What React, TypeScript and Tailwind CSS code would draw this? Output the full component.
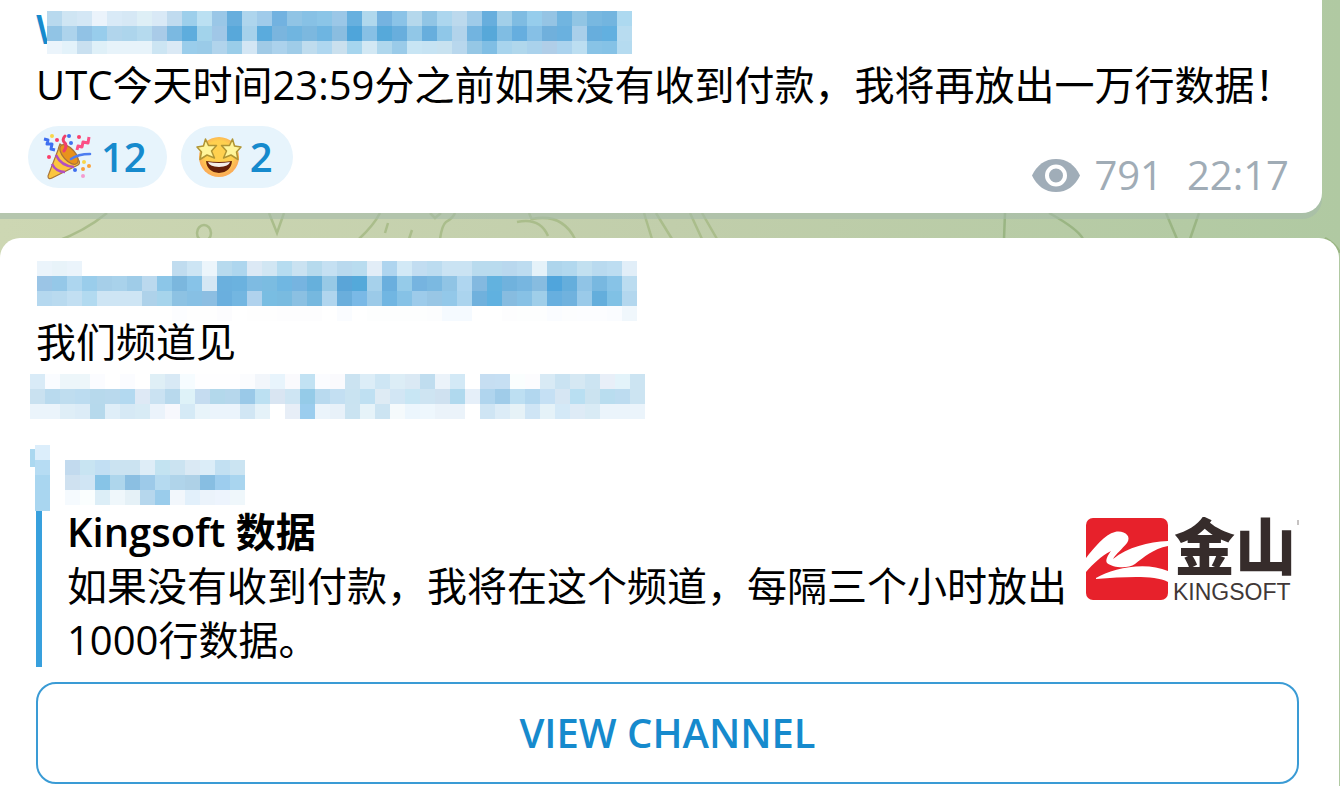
import React from "react";

const CELL = 15;

const channelName = [
  "b8d9ee cfe5f3 d4e7f5 ebf3fb d9eaf7 d6e8f5 deeff6 d9e9f6 c0dbef 9dcfeb bbe0f2 9ac7e7 67aedd aed5ed a0cbea 72b2e0 90c4e5 87c1e5 8bc5e7 9bc7e7 67b0df b0d8ed 75b3e0 8bc3e7 b5d8ec 91c5e5 acd6ee bcd9ed 9fcbe9 67aedd a2cfe9 7fbce2 96cdec 95c4e4 71b5e0 91c5e4 78b8e0 73b5df add9f0",
  "91c4e5 add3ec 91c2e5 98cdec b1d5ec add5ec b5daee a9cbe8 7bb9e1 5eaddd a2d3eb a0c7e7 58a8da a6d1eb 5aabdd 7ab5de 70b5e0 7cb8df 6eb5e1 8abde0 4fa5da 87c0e5 56a9da 68aedd 91c7e7 67aedd 8fc7e8 b2d3eb 72b4e0 57a8d9 80bde3 66aedf 86c0e6 70b0dc 6ab1df a9cfea 67aedd 62b0e0 b8dcf0",
  "ebf4fb e3f2fa c9e0f0 dff0f8 e7f3fa e7f3fa e7f3fa cce5f3 dae9f5 9acdeb 9acbe8 b1d4ec 9acde9 d3e6f4 a0cae6 acd2ec 9fcce8 bfdcee afd7f0 cae0ee a6d5ee d2e8f4 afd7ed 9acbe9 c8e5f4 c6e3f3 c8e2f0 b8d7ed 95c7e5 80bee4 a8d4ed b0d7ec aad2ec b0cee8 abd3ee bcdef1 88c3e6 85c2e6 b5dbf0",
];

const secondName = [
  "ebf4fb e8f3f9 ebf4fb ffffff ffffff ffffff ffffff ffffff ffffff c0dcef cde5f4 ecf5fb b7daee aed6ee dce9f5 d1e6f3 b6dcf0 cae2f1 b6daed c5e0f2 b9d9ee b9dcef e2edf7 afd5ef d2e9f6 c2ddf1 bcdcf0 cae3f3 cae3f3 b9dbee b9dbee b9d8ee bddcf0 e5f2f9 aed5ec b2d8ee c2e0f0 b9daef bdddf1 e1eef8",
  "9bc5e6 95c8e8 add6ef 9acdeb a6cfe9 a9d2eb 9fcce8 bbd9ee 8cc6e8 7bb7de 87c3e8 d5e7f4 6ab0de 6bb2df 7ebbe2 7bbce1 70b7e2 76b4e0 66b0dc 97c9e6 5aa5d8 54a9da a6d1eb 6aafde 95cbe9 76b4e0 7bb9e1 90c4e5 afd6f0 83b9e0 62b2df 70b2dd 77b6e0 87bce0 50a5dc 65aedc 90c4e6 78b8e0 87c3e7 bbdcf0",
  "b5d8ef b9daef c2dff2 b2daf0 cee5f4 cee5f4 cee5f4 aed2ea a6d4ec 8dc2e3 87c0e4 8cbee2 6aafde 73b6e1 b0d2ed 79bde2 79bbe0 8bc0e2 76b8df b0d5ee 6aaedc 7ab9e6 9bcae8 71b6e2 86c2e6 9dcbea 98c6e5 93c8e9 abd4ee 70b1dd 60b1e0 87bce0 87c1e5 9fcee9 67afdf 70b2de 9acae9 64aedc 80c1e5 b3d7ee",
  "ffffff ffffff ffffff ffffff ffffff ffffff ffffff ffffff ffffff fcfdff fefefe fefefe fcfcfe ffffff fefefe fefefe fdfdfe fdfdfe fdfdfe ffffff fafcff ffffff fdfefe fdfefe fdfefe fdfefe fcfdfe f5faff f5faff ffffff ffffff fdfdfe fdfefe fdfefe fafcff fcfdfe fcfdff fcfdff fafcff f0f7fc",
];

const channelLink = [
  "d9ebf7 fafcff edf6fa edf6fa fbfcff ffffff fbfcff ffffff dfeff6 d8e9f5 f6fcff fefeff fefeff fefeff fbfcfe f2f6fb e8f4fc fafafd c2e2f3 fbfcff fafafd cbe3f1 dcedf7 cee6f4 dcedf6 dae9f4 c0ddef ebf3fa d3e9f6 ffffff c6def2 c6dff3 fafefe fcfcfe d8eaf5 cae3f2 d5e8f3 cce4f2 e8eff8 e3f3fa cce4f2",
  "c9e1f0 b9daee bfddef bcdcf0 b7d9ec b9d9ed b3d9f0 dee9f5 cae2f2 b8d9ed def2f8 c5dcf0 b3d8eb b6d7ec 9ac9e8 bce0f2 d9e5f2 cee5f3 95cbe8 b9daef c3dff2 c9e3f1 bfe0f2 deebf4 d2e6f4 c8e6f4 cee4f2 cfe1f0 b0d9ee e5eff9 b0d5ee a0cce9 bddff2 b2d7ef c5e0f4 d6e6f3 b9dff2 cbe3f0 b9ddef bddcf0 cce4f2",
  "ebf4fb ebf4fb dfeef7 dcecf7 b6d9ec dfeef8 d6e9f5 d8ebf5 ebf3fb f7f8fd d5eaf6 e8f4fa ebf4fc ebf4fc d1e6f4 e5f2f9 ffffff e7eef7 9bcdee ebf4fb e8f1f9 cae3f1 e6f3f9 cce4f2 f5fafc ecf6fd eef7fd ebf3fa ebf3fa ffffff cfe5f4 dcecf7 e6f2f7 cfe5f5 e5f2f8 d4e9f7 deebf6 d9ebf5 ebf4fb ebf4fb ebf4fb",
];

const siteName = [
  "c2daee c8e4f2 c2dff3 cbe3f1 cbe3f1 deedf7 c3e3f1 cbe3f1 dae9f4 dbedf8 c2e0f2 cbe4f2",
  "cfe1f0 d0e5f4 87c4e7 aed6ec 8bbfe2 9dcae9 b5daf0 b0d4ea aed1e7 87bee2 9dcdee a9d5ef",
  "f5fafe fafefe dceef7 eff7fb e5f1f7 b6d7ed 9acceb f2f7fc e2f0fb ebf3fb edf4fd eff7fb",
];

function Mosaic({ rows, height, className = "" }: { rows: string[]; height?: number; className?: string }) {
  const width = rows[0].split(" ").length * CELL;
  return (
    <svg
      aria-hidden="true"
      width={width}
      height={height ?? rows.length * CELL}
      shapeRendering="crispEdges"
      className={`block shrink-0 ${className}`}
    >
      {rows.map((row, y) =>
        row
          .split(" ")
          .map((c, x) => (
            <rect key={`${x}-${y}`} x={x * CELL} y={y * CELL} width={CELL} height={CELL} fill={`#${c}`} />
          )),
      )}
    </svg>
  );
}

function PartyPopper() {
  return (
    <svg aria-hidden="true" viewBox="0 0 50 46" className="h-[46px] w-[50px] shrink-0">
      <path d="M17 10 Q16 12 15 16 L5 42 Q5 46 9 44 L35 31 Q38 29 35 25 Z" fill="#fbc63f" stroke="#a9743a" strokeWidth="1.2" />
      <ellipse cx="26" cy="20.500" rx="12" ry="6" transform="rotate(48 26 20.500)" fill="#e8921c" stroke="#a9743a" strokeWidth="1.2" />
      <path d="M13 21 Q18 32 31 33 M9 30 Q13 38 22 38" fill="none" stroke="#b14fc0" strokeWidth="2.600" />
      <path d="M21 17 Q25 11 21 8 Q19 5 22 2" fill="none" stroke="#ef3f6b" strokeWidth="3" strokeLinecap="round" />
      <path d="M28 25 Q35 20 47 20" fill="none" stroke="#4d7df0" strokeWidth="2.600" strokeLinecap="round" />
      <path d="M1 5 l4 1 -1 4 5 0 -1 5 4 1" fill="none" stroke="#3f6ff0" strokeWidth="3" strokeLinejoin="round" />
      <path d="M34 16 l1 -4 4 1 1 -5 5 1 1 -6" fill="none" stroke="#fb4f86" strokeWidth="3" strokeLinejoin="round" />
      <g fill="#fb3f6b">
        <circle cx="14" cy="6" r="2" />
        <circle cx="36" cy="3" r="2" />
        <circle cx="6" cy="23" r="2" />
      </g>
      <g fill="#3f6ff0">
        <circle cx="26" cy="2" r="2" />
        <circle cx="28" cy="9" r="2" />
        <circle cx="32" cy="36" r="2" />
      </g>
      <g fill="#f8d648">
        <circle cx="9" cy="2" r="2" />
        <circle cx="41" cy="28" r="2" />
      </g>
      <circle cx="40" cy="35" r="2" fill="#f9a13a" />
      <circle cx="46" cy="32" r="2" fill="#f9a13a" />
      <circle cx="40" cy="42" r="2" fill="#f49bd0" />
    </svg>
  );
}

function StarStruck() {
  return (
    <svg aria-hidden="true" viewBox="0 0 46 42" className="h-[42px] w-[46px] shrink-0">
      <defs>
        <radialGradient id="face" cx="50%" cy="45%" r="50%">
          <stop offset="0.7" stopColor="#ffd04f" />
          <stop offset="1" stopColor="#fbae57" />
        </radialGradient>
      </defs>
      <circle cx="23" cy="21" r="20" fill="url(#face)" />
      <path d="M10 25 Q23 27 36 25 Q35 36 23 37 Q11 36 10 25Z" fill="#651f08" />
      <path d="M12 26 Q23 28 34 26 Q33 30.500 23 31 Q13 30.500 12 26Z" fill="#f4eeea" />
      <g fill="#fff59a" stroke="#b09534" strokeWidth="1.500" strokeLinejoin="round">
        <path d="M9.500 3 L12.500 9.500 L20.500 9.500 L15.500 15 L18.500 22 L11 19 L4 23.500 L5.500 16 L1 11 L7.500 10Z" />
        <path d="M36.500 3 L33.500 9.500 L25.500 9.500 L30.500 15 L27.500 22 L35 19 L42 23.500 L40.500 16 L45 11 L38.500 10Z" />
      </g>
    </svg>
  );
}

function EyeIcon() {
  return (
    <svg aria-hidden="true" viewBox="0 0 48 33" className="h-[33px] w-[48px] shrink-0">
      <path d="M0 16.500 C5 6 13 0 24 0 C35 0 43 6 48 16.500 C43 27 35 33 24 33 C13 33 5 27 0 16.500Z" fill="#a0adb8" />
      <circle cx="24" cy="16.500" r="9" fill="#a0adb8" stroke="#fff" strokeWidth="4" />
    </svg>
  );
}

function KingsoftLogo() {
  return (
    <svg role="img" aria-label="Kingsoft" viewBox="0 0 213 86" className="mt-[72px] h-[86px] w-[213px] shrink-0">
      <rect x="0" y="1" width="82" height="82" rx="7" fill="#e7212b" />
      <path d="M0 41 C8 31 19 17 29 15 C38 13 46 19 41 26 C36 32 30 37 27 42 C42 30 62 25 82 24 L82 29 C67 32 58 40 49 47 C42 52 27 51 21 46 C19 43 22 38 25 34 C15 39 7 47 0 55Z" fill="#fff" />
      <path d="M10 61 C26 51 60 44 82 54 L82 65 C68 58 40 60 10 62Z" fill="#fff" />
      <text x="88" y="53" fontSize="61" fontWeight="900" fontFamily="'Noto Sans CJK SC', sans-serif" fill="#362c2b">
        金山
      </text>
      <text x="87" y="83" fontSize="23" fontFamily="'Liberation Sans', sans-serif" fill="#413837">
        KINGSOFT
      </text>
      <path d="M212 3 v5" stroke="#8d8786" strokeWidth="1" />
    </svg>
  );
}

function Doodles() {
  return (
    <svg aria-hidden="true" viewBox="0 0 1340 40" className="block h-[40px] w-[1340px]" fill="none" stroke="#aabd8b" strokeWidth="2.500">
      <path d="M55 29 Q85 18 107 0" />
      <ellipse cx="204" cy="20" rx="7" ry="8" />
      <path d="M269 0 L277 20 L284 0" />
      <path d="M359 26 Q374 12 380 0 M388 10 l-3 10 M412 17 l-3 9 M440 26 Q442 12 446 9 Q453 5 455 0 M430 0 l5 5 6 -5" />
      <path d="M517 9 Q540 4 548 23 M529 0 l3 7 M532 6 Q562 0 575 26" />
      <path d="M644 0 l8 26 M656 0 l16 26 M690 0 l12 26 M702 0 l15 26" />
      <g stroke="#9ab583">
        <path d="M1005 0 l-1 26 M1049 0 Q1078 16 1083 26 M1166 0 l11 26 M1199 0 l-9 26 M1325 25 Q1336 31 1340 40" />
      </g>
    </svg>
  );
}

function Reaction({ label, count, children }: { label: string; count: number; children: React.ReactNode }) {
  return (
    <button
      type="button"
      aria-label={`${label} ${count}`}
      className="flex h-[62px] items-center gap-2 rounded-full bg-[#e7f4fc] pr-5 pl-[15px] font-semibold text-[#168acd]"
    >
      {children}
      <span>{count}</span>
    </button>
  );
}

export default function App() {
  return (
    <main className="flex min-h-screen flex-col overflow-x-hidden bg-linear-to-r from-[#cdd7b3] via-[#c1ceab] to-[#b0c9a2] font-['Open_Sans','Noto_Sans_CJK_SC',sans-serif] text-[40px] leading-[54px] text-black">
      <article className="relative z-10 mr-[18px] rounded-br-[20px] bg-white pt-[11px] pb-[11px] pl-[28px] shadow-[0_6px_0_#a5bbaa99]">
        <header className="ml-2 flex h-[43px]">
          <span className="w-[11px] shrink-0 overflow-hidden leading-[36px] font-semibold text-[#168acd]">W</span>
          <Mosaic rows={channelName} height={43} />
        </header>
        <p className="mt-1 ml-2">UTC今天时间23:59分之前如果没有收到付款，我将再放出一万行数据！</p>
        <footer className="mt-[14px] flex items-start justify-between pr-[33px]">
          <div className="flex gap-[14px]">
            <Reaction label="Party popper" count={12}>
              <PartyPopper />
            </Reaction>
            <Reaction label="Star struck" count={2}>
              <StarStruck />
            </Reaction>
          </div>
          <div className="mt-[22px] flex items-center text-[#a0acb6]">
            <EyeIcon />
            <span className="ml-[14px]">791</span>
            <time className="ml-6">22:17</time>
          </div>
        </footer>
      </article>

      <div className="h-[25px]">
        <Doodles />
      </div>

      <article className="relative mr-px grow rounded-t-[20px] bg-white pt-[23px] pr-[40px] pb-[2px] pl-[36px]">
        <Mosaic rows={secondName} height={54} className="ml-px overflow-visible" />
        <p>我们频道见</p>
        <Mosaic rows={channelLink} className="mt-[5px] -ml-[6px]" />
        <section className="mt-[26px] flex items-stretch">
          <div className="mr-[15px] -ml-[6px] flex w-5 shrink-0 flex-col">
            <svg aria-hidden="true" width="20" height="66" shapeRendering="crispEdges" className="block">
              <rect x="0" y="4" width="5" height="18" fill="#abd8f0" />
              <rect x="5" y="0" width="15" height="15" fill="#dceefb" />
              <rect x="5" y="15" width="15" height="15" fill="#b6dcf3" />
              <rect x="5" y="30" width="15" height="36" fill="#a9d6f0" />
            </svg>
            <div className="ml-[6px] w-[6px] grow bg-[#38a0dd]" />
          </div>
          <div className="min-w-0 flex-1 pt-[15px]">
            <Mosaic rows={siteName} />
            <div className="pl-[2px]">
              <h2 className="font-semibold">Kingsoft 数据</h2>
              <p>如果没有收到付款，我将在这个频道，每隔三个小时放出1000行数据。</p>
            </div>
          </div>
          <KingsoftLogo />
        </section>
        <button
          type="button"
          className="mt-[15px] h-[102px] w-full rounded-[20px] border-2 border-[#3a9bd5] font-semibold text-[#168acd]"
        >
          VIEW CHANNEL
        </button>
      </article>
    </main>
  );
}
